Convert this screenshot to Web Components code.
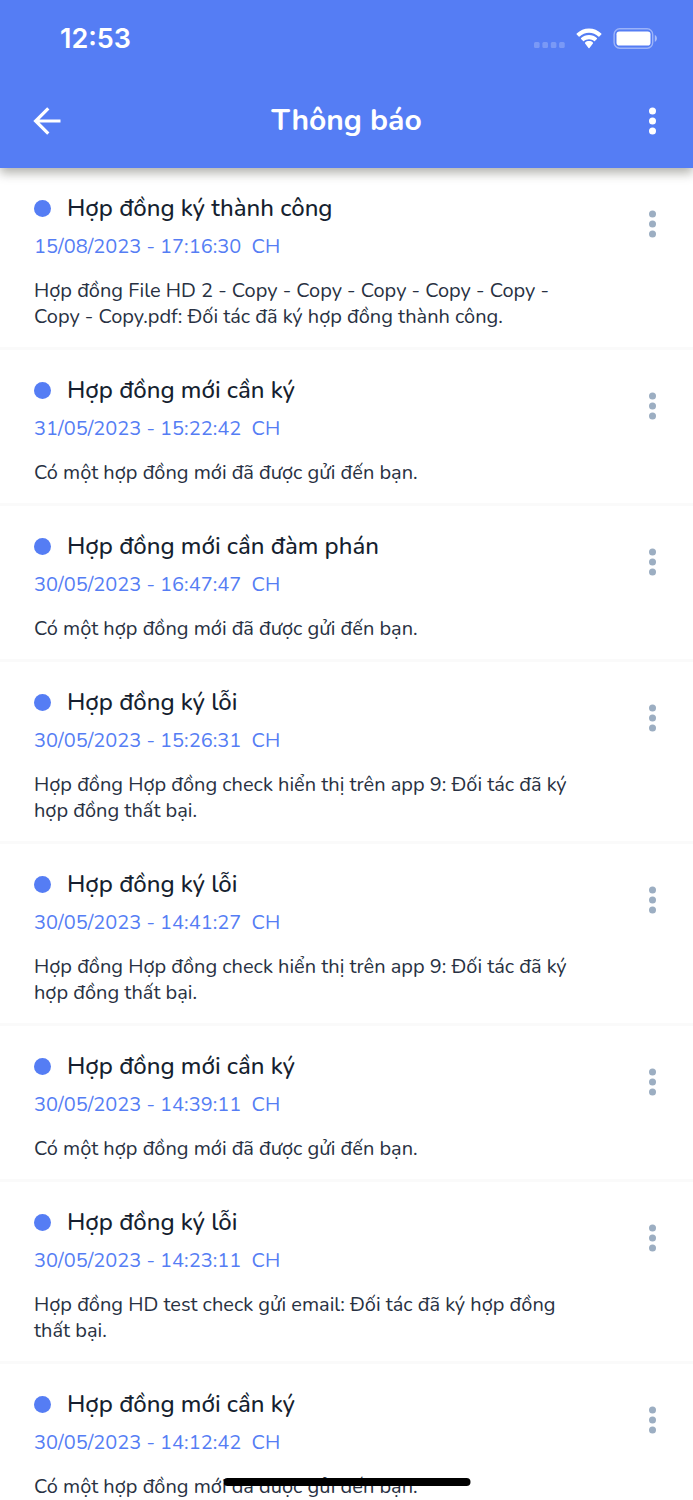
<!DOCTYPE html>
<html lang="vi">
<head>
  <meta charset="utf-8">
  <meta name="viewport" content="width=device-width, initial-scale=1">
  <title>Thông báo</title>
  <style>
    body {
      margin: 0;
      background: #fff;
      font-family: Nunito, "Nunito Sans", Lato, "Open Sans", sans-serif;
      --primary: #557df4;
      --ink: #161f30;
      --text: #283142;
      --muted: #9caec2;
      --divider: #fafafa;
    }
  </style>
</head>
<body>
  <notification-screen>
    <status-bar slot="status" time="12:53"></status-bar>
    <app-bar slot="bar">Thông báo</app-bar>
  </notification-screen>

  <template id="tpl-screen">
    <style>
      :host {
        display: flex;
        flex-direction: column;
        height: 100vh;
        overflow: hidden;
      }
      header {
        flex: none;
        z-index: 1;
        background: var(--primary);
        color: #fff;
        box-shadow: 0 5px 10px rgba(40, 40, 25, .36);
      }
      main {
        flex: 1;
        min-height: 0;
        overflow-y: auto;
        scrollbar-width: none;
      }
      /* sits over the list */
      .home {
        position: fixed;
        bottom: 14px;
        left: 50%;
        z-index: 2;
        width: 36%;
        max-width: 247px;
        height: 8px;
        border-radius: 4px;
        background: #000;
        transform: translateX(-50%);
      }
    </style>
    <header>
      <slot name="status"></slot>
      <slot name="bar"></slot>
    </header>
    <main></main>
    <div class="home"></div>
  </template>

  <template id="tpl-status">
    <style>
      :host {
        display: flex;
        align-items: center;
        justify-content: space-between;
        height: 77px;
        padding: 0 35px 0 60px;
      }
      time {
        font: 600 27px/32px Inter, "Liberation Sans", sans-serif;
      }
      .icons {
        display: flex;
        align-items: center;
        gap: 10px;
      }
      svg { display: block; fill: #fff; }
    </style>
    <time></time>
    <div class="icons">
      <svg width="32" height="22" viewBox="0 0 32 22" aria-hidden="true">
        <g opacity=".22">
          <rect x="0" y="14" width="5.6" height="6" rx="1.5"/>
          <rect x="8.4" y="14" width="5.6" height="6" rx="1.5"/>
          <rect x="16.8" y="14" width="5.6" height="6" rx="1.5"/>
          <rect x="25.1" y="14" width="5.6" height="6" rx="1.5"/>
        </g>
      </svg>
      <svg width="27" height="22" viewBox="0.5 0.5 27 22" aria-hidden="true">
        <path d="M13.5 5.2c3.6 0 6.9 1.4 9.4 3.7.3.3.6.3.9 0l2-2c.3-.3.3-.7 0-1C22.5 2.8 18.2.9 13.5.9S4.5 2.8 1.2 5.9c-.3.3-.3.7 0 1l2 2c.3.3.6.3.9 0 2.5-2.3 5.8-3.7 9.4-3.7z"/>
        <path d="M13.5 11.7c1.9 0 3.7.7 5 1.9.3.3.7.3.9 0l2-2c.3-.3.3-.7 0-1-2.1-1.9-4.900-3.100-7.900-3.100s-5.800 1.200-7.900 3.100c-.3.3-.3.7 0 1l2 2c.2.3.6.3.9 0 1.300-1.200 3.100-1.900 5-1.900z"/>
        <path d="M17.4 15.9c.3-.3.3-.7 0-1-1.100-.8-2.400-1.300-3.900-1.300s-2.800.5-3.900 1.300c-.3.3-.3.7 0 1l3.400 4.500c.3.3.7.3 1 0z"/>
      </svg>
      <svg width="45" height="22" viewBox="0 0 45 22" aria-hidden="true">
        <rect x="1.1" y="0.8" width="38.6" height="19.4" rx="5.6" fill="none" stroke="#fff" stroke-width="1.4" opacity=".42"/>
        <rect x="3.5" y="3.4" width="34" height="14.2" rx="2.8"/>
        <path d="M41.8 7.1c1.3.6 2.1 1.9 2.1 3.4s-.8 2.8-2.1 3.4z" opacity=".5"/>
      </svg>
    </div>
  </template>

  <template id="tpl-bar">
    <style>
      :host {
        display: grid;
        grid-template-columns: 34px 1fr 34px;
        align-items: center;
        padding: 23px 27px 27px 33px;
      }
      h1 {
        margin: 0 6px 0 0;
        font-size: 30px;
        line-height: 41px;
        font-weight: 700;
        text-align: center;
      }
      button {
        display: block;
        padding: 0;
        border: 0;
        background: none;
        color: inherit;
        cursor: pointer;
      }
      svg { display: block; }
      more-button { justify-self: end; }
    </style>
    <button type="button" aria-label="Quay lại">
      <svg width="28" height="28" viewBox="0 0 28 28" fill="none" stroke="#fff" stroke-width="3.2">
        <path d="M27.5 14H3M15.3 1.3L2.6 14l12.7 12.7"/>
      </svg>
    </button>
    <h1><slot></slot></h1>
    <more-button></more-button>
  </template>

  <template id="tpl-more">
    <style>
      :host { display: block; width: 28px; }
      button {
        display: block;
        padding: 0;
        border: 0;
        background: none;
        color: inherit;
        cursor: pointer;
      }
      svg { display: block; fill: currentColor; }
    </style>
    <button type="button" aria-label="Tùy chọn">
      <svg width="28" height="28" viewBox="0 0 28 28">
        <circle cx="14.5" cy="4" r="3.5"/>
        <circle cx="14.5" cy="14" r="3.5"/>
        <circle cx="14.5" cy="24" r="3.5"/>
      </svg>
    </button>
  </template>

  <template id="tpl-item">
    <style>
      :host {
        display: flex;
        justify-content: space-between;
        align-items: flex-start;
        padding: 24px 27px 17px 34px;
        border-bottom: 3px solid var(--divider);
        color: var(--ink);
      }
      .content {
        flex: 1;
        min-width: 0;
        max-width: 548px;
      }
      h2 {
        display: flex;
        align-items: center;
        gap: 16px;
        margin: 0;
        font-size: 24px;
        line-height: 32px;
        font-weight: 500;
      }
      h2::before {
        content: "";
        flex: none;
        width: 17px;
        height: 17px;
        border-radius: 50%;
        background: var(--primary);
      }
      .date {
        display: block;
        margin-top: 10px;
        font-size: 20px;
        line-height: 26px;
        color: var(--primary);
        white-space: pre;
      }
      p {
        margin: 18px 0 0;
        font-size: 20px;
        line-height: 26px;
        color: var(--text);
      }
      more-button {
        margin-top: 18px;
        color: var(--muted);
      }
    </style>
    <div class="content">
      <h2></h2>
      <time class="date"></time>
      <p><slot></slot></p>
    </div>
    <more-button></more-button>
  </template>

  <script>
    function attach(el, id) {
      const tpl = document.querySelector(id);
      el.attachShadow({ mode: "open" }).append(document.importNode(tpl.content, true));
      return el.shadowRoot;
    }

    class MoreButton extends HTMLElement {
      constructor() {
        super();
        attach(this, "#tpl-more");
      }
    }
    customElements.define("more-button", MoreButton);

    class StatusBar extends HTMLElement {
      constructor() {
        super();
        attach(this, "#tpl-status");
      }
      connectedCallback() {
        this.shadowRoot.querySelector("time").textContent = this.getAttribute("time");
      }
    }
    customElements.define("status-bar", StatusBar);

    class AppBar extends HTMLElement {
      constructor() {
        super();
        attach(this, "#tpl-bar");
      }
    }
    customElements.define("app-bar", AppBar);

    class NotificationItem extends HTMLElement {
      constructor() {
        super();
        attach(this, "#tpl-item");
      }
      connectedCallback() {
        this.shadowRoot.querySelector("h2").textContent = this.getAttribute("heading");
        this.shadowRoot.querySelector(".date").textContent = this.getAttribute("date");
      }
    }
    customElements.define("notification-item", NotificationItem);

    const moi = "Có một hợp đồng mới đã được gửi đến bạn.";
    const loi = "Hợp đồng Hợp đồng check hiển thị trên app 9: Đối tác đã ký hợp đồng thất bại.";

    const notifications = [
      ["Hợp đồng ký thành công", "15/08/2023 - 17:16:30  CH", "Hợp đồng File HD 2 - Copy - Copy - Copy - Copy - Copy - Copy - Copy.pdf: Đối tác đã ký hợp đồng thành công."],
      ["Hợp đồng mới cần ký", "31/05/2023 - 15:22:42  CH", moi],
      ["Hợp đồng mới cần đàm phán", "30/05/2023 - 16:47:47  CH", moi],
      ["Hợp đồng ký lỗi", "30/05/2023 - 15:26:31  CH", loi],
      ["Hợp đồng ký lỗi", "30/05/2023 - 14:41:27  CH", loi],
      ["Hợp đồng mới cần ký", "30/05/2023 - 14:39:11  CH", moi],
      ["Hợp đồng ký lỗi", "30/05/2023 - 14:23:11  CH", "Hợp đồng HD test check gửi email: Đối tác đã ký hợp đồng thất bại."],
      ["Hợp đồng mới cần ký", "30/05/2023 - 14:12:42  CH", moi]
    ];

    class NotificationScreen extends HTMLElement {
      constructor() {
        super();
        const list = attach(this, "#tpl-screen").querySelector("main");
        for (const [heading, date, text] of notifications) {
          const item = document.createElement("notification-item");
          item.setAttribute("heading", heading);
          item.setAttribute("date", date);
          item.textContent = text;
          list.append(item);
        }
      }
    }
    customElements.define("notification-screen", NotificationScreen);
  </script>
</body>
</html>
